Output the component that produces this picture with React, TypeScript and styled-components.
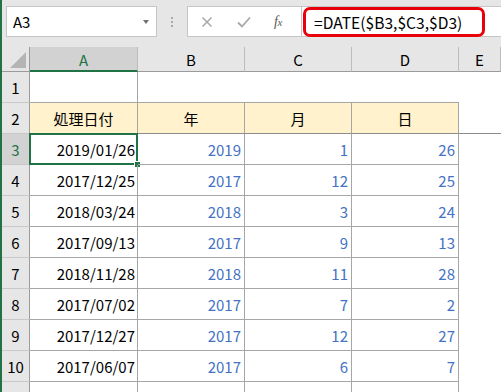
import React from "react";
import styled, { createGlobalStyle, css } from "styled-components";

const GlobalStyle = createGlobalStyle`
  html, body { margin: 0; padding: 0; background: #ffffff; overflow: hidden; }
  #root { width: 501px; height: 392px; }
`;

const FONT = `"Noto Sans CJK JP", "Noto Sans", sans-serif`;
const GREEN = "#217346";
const TABLE_LINE = "#a6a6a6";

const Window = styled.div`
  display: flex;
  width: 501px;
  height: 392px;
  overflow: hidden;
  background: #ffffff;
  font-family: ${FONT};
  color: #000;
`;

const FrameEdge = styled.div`
  flex: none;
  width: 2px;
  background: ${GREEN};
`;

const Main = styled.div`
  flex: 1;
  min-width: 0;
  display: flex;
  flex-direction: column;
  overflow: hidden;
`;

/* ---------- formula bar ---------- */

const FormulaBar = styled.div`
  flex: none;
  height: 47px;
  box-sizing: border-box;
  padding: 6px 0 0 4px;
  background: #e6e6e6;
  display: flex;
  align-items: flex-start;
`;

const NameBox = styled.div`
  width: 151px;
  height: 31px;
  box-sizing: border-box;
  border: 1px solid #c6c6c6;
  background: #fff;
  display: flex;
  align-items: center;
  justify-content: space-between;
  padding: 0 7px 0 6px;
  font-size: 15px;
`;

const DropArrow = styled.span`
  width: 0;
  height: 0;
  border-left: 3.5px solid transparent;
  border-right: 3.5px solid transparent;
  border-top: 4px solid #707070;
`;

const Grip = styled.div`
  width: 30px;
  height: 31px;
  display: flex;
  flex-direction: column;
  align-items: center;
  justify-content: center;
  gap: 2px;
`;

const GripDot = styled.span`
  width: 2px;
  height: 2px;
  background: #a9a9a9;
`;

const ButtonBox = styled.div`
  width: 114px;
  height: 31px;
  box-sizing: border-box;
  border: 1px solid #c6c6c6;
  border-right: none;
  background: #fff;
  display: flex;
  align-items: center;
  padding-left: 12px;
`;

const BarButton = styled.span<{ $w: number }>`
  width: ${(p) => p.$w}px;
  display: flex;
  align-items: center;
  justify-content: center;
`;

const FxLabel = styled.span`
  font-family: "Liberation Serif", "DejaVu Serif", serif;
  font-style: italic;
  font-size: 14px;
  color: #5a5a5a;
  letter-spacing: -0.5px;
  & > small {
    font-size: 11px;
  }
`;

const FormulaInput = styled.div`
  position: relative;
  flex: 1;
  height: 31px;
  box-sizing: border-box;
  border: 1px solid #c6c6c6;
  border-right: none;
  background: #fff;
  display: flex;
  align-items: center;
  padding-left: 12px;
  font-size: 15.6px;
  white-space: nowrap;
`;

const Highlight = styled.div`
  position: absolute;
  left: 1px;
  top: 0px;
  width: 182px;
  height: 30px;
  box-sizing: border-box;
  border: 3px solid #e8000b;
  border-radius: 7px;
  pointer-events: none;
`;

/* ---------- sheet ---------- */

const Sheet = styled.div`
  display: grid;
  grid-template-columns: 28px 108px 107px 107px 107px 1fr;
  grid-template-rows: 25px repeat(11, 31px);
  background: #fff;
`;

const Corner = styled.div`
  background: #e6e6e6;
  border-right: 1px solid #9b9b9b;
  border-bottom: 1px solid #9b9b9b;
  box-sizing: border-box;
  position: relative;
`;

const CornerTriangle = styled.span`
  position: absolute;
  right: 3px;
  bottom: 3px;
  width: 0;
  height: 0;
  border-left: 16px solid transparent;
  border-bottom: 16px solid #b4b4b4;
`;

const ColHeader = styled.div<{ $selected?: boolean }>`
  box-sizing: border-box;
  background: ${(p) => (p.$selected ? "#d2d2d2" : "#e6e6e6")};
  color: ${(p) => (p.$selected ? GREEN : "#000")};
  border-right: 1px solid #bcbcbc;
  border-bottom: ${(p) => (p.$selected ? `2px solid ${GREEN}` : "1px solid #9b9b9b")};
  display: flex;
  align-items: center;
  justify-content: center;
  font-size: 15px;
  padding-top: ${(p) => (p.$selected ? "1px" : "0")};
`;

const RowHeader = styled.div<{ $selected?: boolean }>`
  box-sizing: border-box;
  background: ${(p) => (p.$selected ? "#d2d2d2" : "#e6e6e6")};
  color: ${(p) => (p.$selected ? GREEN : "#000")};
  border-right: 1px solid #9b9b9b;
  border-bottom: 1px solid #c8c8c8;
  display: flex;
  align-items: center;
  justify-content: center;
  font-size: 15px;
`;

const Cell = styled.div<{
  $kind: "blank" | "head" | "date" | "num";
  $top?: boolean;
  $freeze?: boolean;
  $freezeCol?: boolean;
}>`
  position: relative;
  box-sizing: border-box;
  display: flex;
  align-items: center;
  font-size: 15px;
  white-space: nowrap;
  ${(p) =>
    p.$kind === "head" &&
    css`
      background: #fff2cc;
      justify-content: center;
      border-right: 1px solid ${TABLE_LINE};
      border-bottom: 1px solid ${TABLE_LINE};
    `}
  ${(p) =>
    (p.$kind === "date" || p.$kind === "num") &&
    css`
      justify-content: flex-end;
      padding-right: 3px;
      border-right: 1px solid ${TABLE_LINE};
      border-bottom: 1px solid ${TABLE_LINE};
    `}
  ${(p) =>
    p.$kind === "date" &&
    css`
      color: #000;
      padding-right: 2px;
    `}
  ${(p) =>
    p.$kind === "num" &&
    css`
      color: #4472c4;
    `}
  ${(p) =>
    p.$top &&
    css`
      border-bottom: 1px solid ${TABLE_LINE};
    `}
  ${(p) =>
    p.$freeze &&
    css`
      border-bottom: 1px solid #8c8c8c;
    `}
  ${(p) =>
    p.$freezeCol &&
    css`
      border-right: 1px solid ${TABLE_LINE};
    `}
`;

const Selection = styled.div`
  position: absolute;
  left: -1px;
  top: -1px;
  right: -1px;
  bottom: -1px;
  border: 2px solid ${GREEN};
  pointer-events: none;
`;

const FillHandle = styled.span`
  position: absolute;
  right: -4px;
  bottom: -4px;
  width: 5px;
  height: 5px;
  background: ${GREEN};
  outline: 1px solid #fff;
`;

const CrossIcon = () => (
  <svg width="12" height="12" viewBox="0 0 12 12">
    <path d="M1.5 1.5 L10.5 10.5 M10.5 1.5 L1.5 10.5" stroke="#a8a8a8" strokeWidth="1.5" fill="none" />
  </svg>
);

const CheckIcon = () => (
  <svg width="14" height="12" viewBox="0 0 14 12">
    <path d="M1 6.5 L5 10.5 L13 1.5" stroke="#a8a8a8" strokeWidth="1.8" fill="none" />
  </svg>
);

type Row = [string, number, number, number];

const rows: Row[] = [
  ["2019/01/26", 2019, 1, 26],
  ["2017/12/25", 2017, 12, 25],
  ["2018/03/24", 2018, 3, 24],
  ["2017/09/13", 2017, 9, 13],
  ["2018/11/28", 2018, 11, 28],
  ["2017/07/02", 2017, 7, 2],
  ["2017/12/27", 2017, 12, 27],
  ["2017/06/07", 2017, 6, 7],
  ["2018/03/23", 2018, 3, 23],
];

const columns = ["A", "B", "C", "D", "E"];
const headings = ["処理日付", "年", "月", "日"];

export default function App() {
  return (
    <>
      <GlobalStyle />
      <Window>
        <FrameEdge />
        <Main>
          <FormulaBar>
            <NameBox>
              <span>A3</span>
              <DropArrow />
            </NameBox>
            <Grip>
              <GripDot />
              <GripDot />
              <GripDot />
            </Grip>
            <ButtonBox>
              <BarButton $w={13}>
                <CrossIcon />
              </BarButton>
              <BarButton $w={24} />
              <BarButton $w={14}>
                <CheckIcon />
              </BarButton>
              <BarButton $w={20} />
              <BarButton $w={14}>
                <FxLabel>
                  f<small>x</small>
                </FxLabel>
              </BarButton>
            </ButtonBox>
            <FormulaInput>
              <Highlight />
              =DATE($B3,$C3,$D3)
            </FormulaInput>
          </FormulaBar>

          <Sheet>
            <Corner>
              <CornerTriangle />
            </Corner>
            {columns.map((c) => (
              <ColHeader key={c} $selected={c === "A"}>
                {c}
              </ColHeader>
            ))}

            {/* row 1 */}
            <RowHeader>1</RowHeader>
            <Cell $kind="blank" $top $freezeCol />
            <Cell $kind="blank" $top />
            <Cell $kind="blank" $top />
            <Cell $kind="blank" $top />
            <Cell $kind="blank" />

            {/* row 2 */}
            <RowHeader>2</RowHeader>
            {headings.map((h) => (
              <Cell key={h} $kind="head" $freeze>
                {h}
              </Cell>
            ))}
            <Cell $kind="blank" $freeze />

            {rows.map((r, i) => {
              const n = i + 3;
              return (
                <React.Fragment key={n}>
                  <RowHeader $selected={n === 3}>{n}</RowHeader>
                  <Cell $kind="date">
                    {r[0]}
                    {n === 3 && (
                      <Selection>
                        <FillHandle />
                      </Selection>
                    )}
                  </Cell>
                  <Cell $kind="num">{r[1]}</Cell>
                  <Cell $kind="num">{r[2]}</Cell>
                  <Cell $kind="num">{r[3]}</Cell>
                  <Cell $kind="blank" />
                </React.Fragment>
              );
            })}
          </Sheet>
        </Main>
      </Window>
    </>
  );
}
